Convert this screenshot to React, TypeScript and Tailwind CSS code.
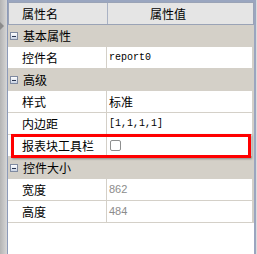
import React from "react";

type Row =
  | { kind: "cat"; label: string }
  | { kind: "prop"; label: string; value?: string; mono?: boolean; muted?: boolean; check?: boolean; marked?: boolean };

const rows: Row[] = [
  { kind: "cat", label: "基本属性" },
  { kind: "prop", label: "控件名", value: "report0", mono: true },
  { kind: "cat", label: "高级" },
  { kind: "prop", label: "样式", value: "标准" },
  { kind: "prop", label: "内边距", value: "[1,1,1,1]", mono: true },
  { kind: "prop", label: "报表块工具栏", check: true, marked: true },
  { kind: "cat", label: "控件大小" },
  { kind: "prop", label: "宽度", value: "862", muted: true },
  { kind: "prop", label: "高度", value: "484", muted: true },
];

const cjk = { fontFamily: '"Noto Sans CJK SC", "Noto Sans", sans-serif' };

function MinusBox() {
  return (
    <span className="flex h-[8px] w-[8px] items-center justify-center border border-[#7f8aa0] bg-gradient-to-b from-white to-[#c9d3e4]">
      <span className="h-[1px] w-[4px] bg-[#2a3550]" />
    </span>
  );
}

function CategoryRow({ label }: { label: string }) {
  return (
    <div className="flex h-[22px] items-center bg-[#d4d0c8] pl-[2px]">
      <MinusBox />
      <span className="ml-[5px] text-[12px] leading-none text-black" style={cjk}>
        {label}
      </span>
    </div>
  );
}

function PropRow({ row }: { row: Extract<Row, { kind: "prop" }> }) {
  return (
    <div className="relative flex h-[22px] border-b border-[#d4d0c8] bg-white">
      <div className="flex w-[99px] items-center border-r border-[#d4d0c8] pl-[14px]">
        <span className="text-[12px] leading-none text-black" style={cjk}>
          {row.label}
        </span>
      </div>
      <div className="flex flex-1 items-center pl-[2px]">
        {row.check && <span className="ml-[1px] h-[11px] w-[11px] rounded-[2px] border border-[#8e8f8f] bg-white" />}
        {row.value && row.mono && (
          <span className="text-[10px] leading-none text-black" style={{ fontFamily: '"Liberation Mono", monospace' }}>
            {row.value}
          </span>
        )}
        {row.value && row.muted && (
          <span className="text-[11px] leading-none text-[#8c8c8c]" style={{ fontFamily: '"Liberation Sans", sans-serif' }}>
            {row.value}
          </span>
        )}
        {row.value && !row.mono && !row.muted && (
          <span className="text-[12px] leading-none text-black" style={cjk}>
            {row.value}
          </span>
        )}
      </div>
      {row.marked && (
        <div className="pointer-events-none absolute left-[3px] right-[1px] top-[-1px] bottom-[-2px] border-[3px] border-[#ff0000] shadow-[1px_1px_2px_rgba(0,0,0,0.35)]" />
      )}
    </div>
  );
}

export default function App() {
  return (
    <div className="flex h-[254px] w-[257px] overflow-hidden bg-[#d8d8d8]">
      <div className="relative w-[8px] border-r border-[#8c9ab8] bg-gradient-to-r from-[#b4b4b4] to-[#d6d6d6]">
        <span className="absolute left-0 top-[22px] h-0 w-0 border-y-[4px] border-l-[4px] border-y-transparent border-l-[#8a8a8a]" />
      </div>
      <div className="flex w-[246px] flex-col border-t-2 border-[#9aa6c0] bg-white">
        <div className="flex h-[23px] border border-[#9aa3b6] bg-[#e5e5e5]">
          <div className="flex w-[99px] items-center border-r border-[#a9b2c4] pl-[13px]">
            <span className="text-[12px] leading-none text-black" style={cjk}>
              属性名
            </span>
          </div>
          <div className="flex flex-1 items-center pl-[42px]">
            <span className="text-[12px] leading-none text-black" style={cjk}>
              属性值
            </span>
          </div>
        </div>
        <div className="bg-[#d4d0c8] pr-[2px]">
          {rows.map((r, i) =>
            r.kind === "cat" ? <CategoryRow key={i} label={r.label} /> : <PropRow key={i} row={r} />
          )}
        </div>
        <div className="flex-1 bg-white" />
      </div>
      <div className="w-[3px] border-l-2 border-[#9aa6c0] bg-[#dcdcdc]" />
    </div>
  );
}
